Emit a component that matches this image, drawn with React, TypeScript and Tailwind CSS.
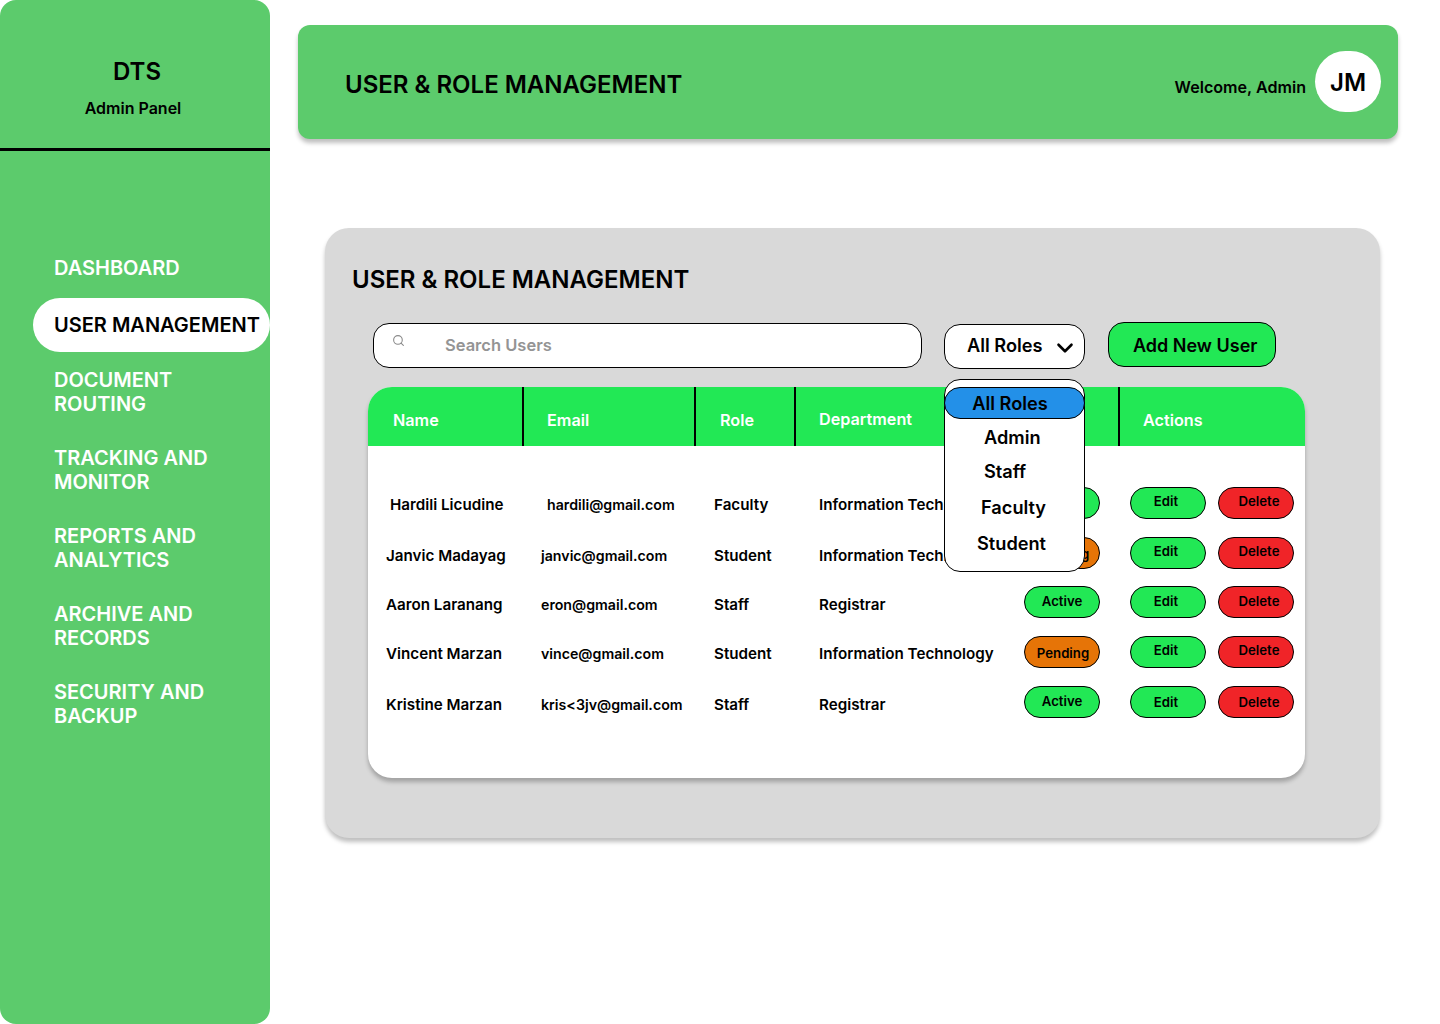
import React from 'react';
import { ChevronDown, Search } from 'lucide-react';

interface UserRow {
  name: string;
  email: string;
  role: string;
  department: string;
  status: 'Active' | 'Pending';
  namePad: string;
  emailPad: string;
  rowHeight: string;
  textPad: string;
  statusNudge: string;
  actionNudge: string;
}

const navItems = [
  { label: 'DOCUMENT ROUTING', width: 'w-[150px]' },
  { label: 'TRACKING AND MONITOR', width: 'w-[170px]' },
  { label: 'REPORTS AND ANALYTICS', width: 'w-[170px]' },
  { label: 'ARCHIVE AND RECORDS', width: 'w-[170px]' },
  { label: 'SECURITY AND BACKUP', width: 'w-[170px]' },
];

const users: UserRow[] = [
  { name: 'Hardili Licudine', email: 'hardili@gmail.com', role: 'Faculty', department: 'Information Technology', status: 'Active', namePad: 'pl-[22px]', emailPad: 'pl-[6px]', rowHeight: 'h-[50px]', textPad: 'pt-[7px]', statusNudge: 'pb-[2px]', actionNudge: 'pb-[2px]' },
  { name: 'Janvic Madayag', email: 'janvic@gmail.com', role: 'Student', department: 'Information Technology', status: 'Pending', namePad: 'pl-[18px]', emailPad: 'pl-0', rowHeight: 'h-[49px]', textPad: 'pt-[8px]', statusNudge: 'pt-[4px] pl-[2px]', actionNudge: 'pb-[2px]' },
  { name: 'Aaron Laranang', email: 'eron@gmail.com', role: 'Staff', department: 'Registrar', status: 'Active', namePad: 'pl-[18px]', emailPad: 'pl-0', rowHeight: 'h-[50px]', textPad: 'pt-[8px]', statusNudge: '', actionNudge: '' },
  { name: 'Vincent Marzan', email: 'vince@gmail.com', role: 'Student', department: 'Information Technology', status: 'Pending', namePad: 'pl-[18px]', emailPad: 'pl-0', rowHeight: 'h-[50px]', textPad: 'pt-[7px]', statusNudge: 'pt-[4px] pl-[2px]', actionNudge: 'pb-[2px]' },
  { name: 'Kristine Marzan', email: 'kris<3jv@gmail.com', role: 'Staff', department: 'Registrar', status: 'Active', namePad: 'pl-[18px]', emailPad: 'pl-0', rowHeight: 'h-[50px]', textPad: 'pt-[8px]', statusNudge: '', actionNudge: 'pt-[2px]' },
];

const Pill = ({ label, className }: { label: string; className: string }) => (
  <div className={`flex h-8 w-[76px] items-center justify-center rounded-full border border-black text-[13.2px] font-semibold text-black ${className}`}>
    {label}
  </div>
);

const App: React.FC = () => {
  return (
    <div className="flex h-[1024px] w-[1440px] overflow-hidden bg-white font-['Inter',sans-serif] text-black">
      {/* Sidebar */}
      <aside className="h-[1024px] w-[270px] shrink-0 rounded-[16px] bg-[#5ccb6c]">
        <div className="h-[151px] border-b-[3px] border-black pt-[55px] text-center">
          <div className="pl-[4px] text-[24px] leading-[33px] font-semibold">DTS</div>
          <div className="mt-[10px] pr-[4px] text-[16px] leading-[20px] font-semibold">Admin Panel</div>
        </div>

        <nav className="pt-[105px] text-[20px] leading-[24px] font-semibold text-white">
          <div className="pl-[54px]">DASHBOARD</div>
          <div className="mt-[18px] ml-[33px] flex h-[54px] items-center rounded-full bg-white pl-[21px] whitespace-nowrap text-black">
            USER MANAGEMENT
          </div>
          <div className="mt-[16px] flex flex-col gap-[30px] pl-[54px]">
            {navItems.map((item) => (
              <div key={item.label} className={item.width}>{item.label}</div>
            ))}
          </div>
        </nav>
      </aside>

      <main className="pt-[25px] pl-[28px]">
        {/* Top bar */}
        <header className="flex h-[114px] w-[1100px] items-center justify-between rounded-[12px] bg-[#5ccb6c] pr-[17px] pl-[47px] shadow-[0_4px_4px_rgba(0,0,0,0.25)]">
          <h1 className="pt-[6px] text-[24px] font-semibold">USER &amp; ROLE MANAGEMENT</h1>
          <div className="flex items-start gap-[9px]">
            <span className="pt-[24px] text-[16.1px] font-semibold">Welcome, Admin</span>
            <div className="mb-[2px] flex h-[61px] w-[66px] items-center justify-center rounded-full bg-white pt-[4px] text-[24px] font-semibold">JM</div>
          </div>
        </header>

        {/* Content card */}
        <section className="relative mt-[89px] ml-[27px] h-[610px] w-[1055px] rounded-[24px] bg-[#d9d9d9] pt-[35px] shadow-[0_4px_4px_rgba(0,0,0,0.25)]">
          <h2 className="pl-[27px] text-[24px] leading-[33px] font-semibold">USER &amp; ROLE MANAGEMENT</h2>

          {/* Filters */}
          <div className="mt-[26px] flex items-start pl-[48px]">
            <div className="mt-px flex h-[45px] w-[549px] items-center rounded-[16px] border border-black bg-white">
              <Search size={13} className="mb-[10px] ml-[18px] text-[#8a8a8a]" />
              <span className="ml-[40px] text-[16.5px] font-semibold text-[#949494]">Search Users</span>
            </div>
            <div className="mt-[2px] ml-[22px] flex h-[45px] w-[141px] items-center justify-between rounded-[16px] border border-black bg-white pr-[6px] pl-[22px] text-[18.2px] font-semibold">
              <span className="mb-[2px]">All Roles</span>
              <ChevronDown size={26} strokeWidth={2.4} className="mt-[2px]" />
            </div>
            <div className="ml-[23px] flex h-[45px] w-[168px] items-center rounded-[16px] border border-black bg-[#22e855] pt-[2px] pl-[24px] text-[18px] font-semibold">
              Add New User
            </div>
          </div>

          {/* Users table */}
          <div className="mt-[18px] ml-[43px] h-[391px] w-[937px] overflow-hidden rounded-[24px] bg-white shadow-[0_4px_4px_rgba(0,0,0,0.25)]">
            <div className="flex h-[59px] bg-[#22e855] text-[16.2px] font-semibold text-white">
              <div className="w-[156px] border-r-2 border-black pt-[21px] pl-[25px]">Name</div>
              <div className="w-[172px] border-r-2 border-black pt-[21px] pl-[23px]">Email</div>
              <div className="w-[100px] border-r-2 border-black pt-[21px] pl-[24px]">Role</div>
              <div className="w-[324px] border-r-2 border-black pt-[20px] pl-[23px]">Department</div>
              <div className="pt-[21px] pl-[23px]">Actions</div>
            </div>

            <div className="pt-[41px] font-semibold">
              {users.map((user) => (
                <div key={user.email} className={`flex items-start text-[15.2px] ${user.rowHeight}`}>
                  <div className={`w-[173px] ${user.textPad} ${user.namePad}`}>{user.name}</div>
                  <div className={`w-[173px] text-[14.2px] ${user.textPad} ${user.emailPad}`}>{user.email}</div>
                  <div className={`w-[105px] ${user.textPad}`}>{user.role}</div>
                  <div className={`w-[205px] ${user.textPad}`}>{user.department}</div>
                  <div className="w-[106px]">
                    <Pill label={user.status} className={`${user.status === 'Active' ? 'bg-[#22e855]' : 'bg-[#e67407]'} ${user.statusNudge}`} />
                  </div>
                  <div className="w-[88px]">
                    <Pill label="Edit" className={`bg-[#22e855] pr-[4px] ${user.actionNudge}`} />
                  </div>
                  <Pill label="Delete" className={`bg-[#f02428] pl-[6px] ${user.actionNudge}`} />
                </div>
              ))}
            </div>
          </div>

          {/* Open roles menu */}
          <div className="absolute top-[151px] left-[619px] h-[193px] w-[141px] rounded-[16px] border border-black bg-white text-[18.2px] font-semibold">
            <div className="mt-[7px] -ml-px flex h-[32px] w-[141px] items-center justify-center rounded-full border border-black bg-[#2390e8] pt-[2px] pr-[9px]">All Roles</div>
            <div className="mt-[5px] pl-[39px]">Admin</div>
            <div className="mt-[7px] pl-[39px]">Staff</div>
            <div className="mt-[8px] pl-[36px]">Faculty</div>
            <div className="mt-[9px] pl-[32px]">Student</div>
          </div>
        </section>
      </main>
    </div>
  );
};

export default App;
